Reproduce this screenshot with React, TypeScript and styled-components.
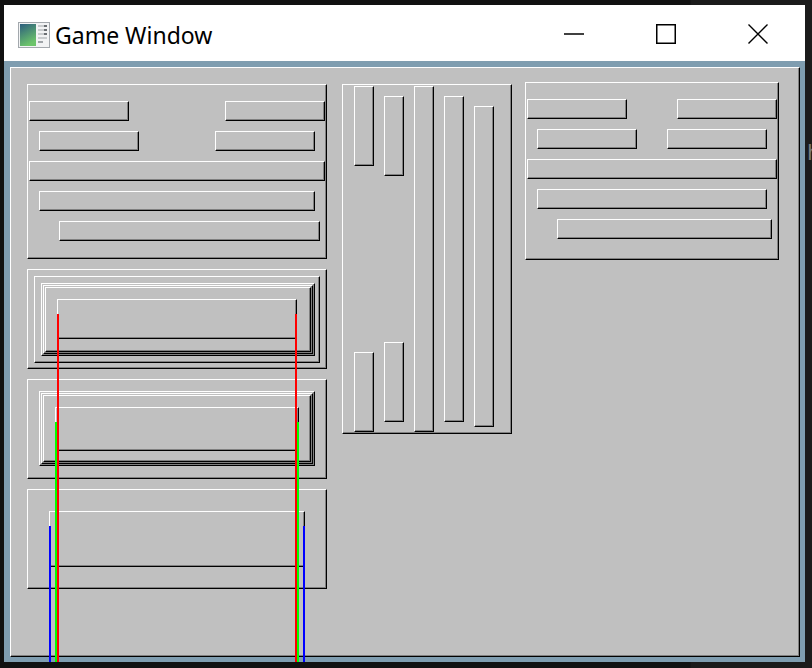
import React from "react";
import styled, { createGlobalStyle, css } from "styled-components";

const Global = createGlobalStyle`
  html, body { margin: 0; padding: 0; background: #111111; }
  #root { width: 812px; height: 668px; }
  * { box-sizing: border-box; }
`;

const raised = css`
  border-style: solid;
  border-width: 1px;
  border-color: #ffffff #000000 #000000 #ffffff;
  box-shadow: inset -1px -1px 0 #808080;
`;

const Desktop = styled.div`
  position: relative;
  width: 812px;
  height: 668px;
  padding: 5px 0 0 4px;
  background: #111111;
  overflow: hidden;
  font-family: "Noto Sans", "Open Sans", sans-serif;
`;

const BackWindow = styled.div`
  position: absolute;
  left: 690px;
  top: 0;
  width: 122px;
  height: 668px;
  background: #1b1b1b;
  border-left: 1px solid #161616;
`;

const BackGlyph = styled.span`
  position: absolute;
  left: 116px;
  top: 136px;
  font-size: 22px;
  color: #7a7a7a;
`;

const Window = styled.div`
  position: relative;
  width: 801px;
  height: 657px;
  display: flex;
  flex-direction: column;
  overflow: hidden;
`;

const TitleBar = styled.div`
  height: 56px;
  flex: none;
  background: #ffffff;
  display: flex;
  align-items: center;
  padding: 0 1px 0 14px;
`;

const AppIcon = styled.svg`
  display: block;
  flex: none;
  margin-top: 4px;
`;

const Title = styled.span`
  margin-left: 5px;
  padding-top: 3px;
  font-size: 23px;
  color: #000000;
  white-space: nowrap;
`;

const Controls = styled.div`
  margin-left: auto;
  display: flex;
  height: 100%;
`;

const CtrlButton = styled.div`
  width: 92px;
  height: 100%;
  display: flex;
  align-items: center;
  justify-content: center;
  padding-top: 2px;
`;

const Frame = styled.div`
  flex: 1;
  background: #7f9db0;
  padding: 6px 5px 5px 6px;
  display: flex;
`;

const Canvas = styled.div`
  ${raised};
  flex: 1;
  background: #c0c0c0;
  display: flex;
  align-items: flex-start;
  padding: 16px 0 0 16px;
`;

const LeftColumn = styled.div`
  display: flex;
  flex-direction: column;
  gap: 10px;
  width: 300px;
`;

const Box = styled.div<{ $w: number; $h: number; $pad?: string }>`
  ${raised};
  position: relative;
  flex: none;
  width: ${(p) => p.$w}px;
  height: ${(p) => p.$h}px;
  padding: ${(p) => p.$pad ?? "0"};
`;

const RowPanel = styled.div<{ $w: number; $h: number; $ml?: number; $mt?: number }>`
  ${raised};
  flex: none;
  width: ${(p) => p.$w}px;
  height: ${(p) => p.$h}px;
  margin-left: ${(p) => p.$ml ?? 0}px;
  margin-top: ${(p) => p.$mt ?? 0}px;
  padding: 16px 1px 0 1px;
  display: flex;
  flex-direction: column;
  gap: 10px;
`;

const Row = styled.div<{ $inset?: string }>`
  display: flex;
  justify-content: space-between;
  height: 20px;
  padding: ${(p) => p.$inset ?? "0"};
`;

const HBar = styled.div<{ $grow?: boolean }>`
  ${raised};
  height: 20px;
  width: ${(p) => (p.$grow ? "auto" : "100px")};
  flex: ${(p) => (p.$grow ? 1 : "none")};
`;

const ColumnPanel = styled.div<{ $ml: number }>`
  ${raised};
  flex: none;
  width: 170px;
  height: 350px;
  margin-left: ${(p) => p.$ml}px;
  padding: 1px 0 1px 11px;
  display: flex;
  gap: 10px;
`;

const Col = styled.div<{ $inset?: string }>`
  display: flex;
  flex-direction: column;
  justify-content: space-between;
  width: 20px;
  padding: ${(p) => p.$inset ?? "0"};
`;

const VBar = styled.div<{ $grow?: boolean }>`
  ${raised};
  width: 20px;
  height: ${(p) => (p.$grow ? "auto" : "80px")};
  flex: ${(p) => (p.$grow ? 1 : "none")};
`;

const Marker = styled.div<{ $color: string; $side: "left" | "right" }>`
  position: absolute;
  z-index: 1;
  top: 14px;
  ${(p) => p.$side}: -1px;
  width: 2px;
  height: 420px;
  background: ${(p) => p.$color};
`;

function Markers({ color }: { color: string }) {
  return (
    <>
      <Marker $color={color} $side="left" />
      <Marker $color={color} $side="right" />
    </>
  );
}

function RowLayout({ w, h, ml, mt }: { w: number; h: number; ml?: number; mt?: number }) {
  return (
    <RowPanel $w={w} $h={h} $ml={ml} $mt={mt}>
      <Row>
        <HBar />
        <HBar />
      </Row>
      <Row $inset="0 10px">
        <HBar />
        <HBar />
      </Row>
      <Row>
        <HBar $grow />
      </Row>
      <Row $inset="0 10px">
        <HBar $grow />
      </Row>
      <Row $inset="0 5px 0 30px">
        <HBar $grow />
      </Row>
    </RowPanel>
  );
}

export default function App() {
  return (
    <>
      <Global />
      <Desktop>
        <BackWindow>
          <BackGlyph>h</BackGlyph>
        </BackWindow>
        <Window>
          <TitleBar>
            <AppIcon width="32" height="26" viewBox="0 0 32 26">
              <defs>
                <linearGradient id="appGrad" x1="0" y1="0" x2="0.4" y2="1">
                  <stop offset="0" stopColor="#2c5d7e" />
                  <stop offset="1" stopColor="#6cc46a" />
                </linearGradient>
              </defs>
              <rect x="0.5" y="0.5" width="31" height="25" fill="#f2f3f4" stroke="#a3a8ad" />
              <rect x="2" y="2" width="16" height="22" fill="url(#appGrad)" />
              <rect x="20" y="3" width="6" height="2" fill="#c9ccce" />
              <rect x="26" y="3" width="3" height="2" fill="#6b6f73" />
              <rect x="20" y="7" width="6" height="2" fill="#c9ccce" />
              <rect x="26" y="7" width="3" height="2" fill="#6b6f73" />
              <rect x="20" y="11" width="6" height="2" fill="#c9ccce" />
              <rect x="26" y="11" width="3" height="2" fill="#6b6f73" />
              <rect x="20" y="15" width="9" height="2" fill="#c9ccce" />
              <rect x="20" y="19" width="5" height="2" fill="#9fa4a8" />
            </AppIcon>
            <Title>Game Window</Title>
            <Controls>
              <CtrlButton>
                <svg width="20" height="20" viewBox="0 0 20 20">
                  <line x1="0" y1="10" x2="20" y2="10" stroke="#000" strokeWidth="1.5" />
                </svg>
              </CtrlButton>
              <CtrlButton>
                <svg width="20" height="20" viewBox="0 0 20 20">
                  <rect x="0.75" y="0.75" width="18.5" height="18.5" fill="none" stroke="#000" strokeWidth="1.5" />
                </svg>
              </CtrlButton>
              <CtrlButton>
                <svg width="20" height="20" viewBox="0 0 20 20">
                  <path d="M0.5 0.5 L19.5 19.5 M19.5 0.5 L0.5 19.5" stroke="#000" strokeWidth="1.4" />
                </svg>
              </CtrlButton>
            </Controls>
          </TitleBar>
          <Frame>
            <Canvas>
              <LeftColumn>
                <RowLayout w={300} h={175} />
                <Box $w={300} $h={100} $pad="6px">
                  <Box $w={286} $h={87} $pad="6px">
                    <Box $w={274} $h={73} $pad="1px">
                      <Box $w={270} $h={69} $pad="1px">
                        <Box $w={266} $h={65} $pad="11px">
                          <Box $w={240} $h={40}>
                            <Markers color="#ff0000" />
                          </Box>
                        </Box>
                      </Box>
                    </Box>
                  </Box>
                </Box>
                <Box $w={300} $h={100} $pad="11px">
                  <Box $w={276} $h={75} $pad="1px">
                    <Box $w={272} $h={71} $pad="1px">
                      <Box $w={268} $h={67} $pad="11px">
                        <Box $w={244} $h={44}>
                          <Markers color="#00ff00" />
                        </Box>
                      </Box>
                    </Box>
                  </Box>
                </Box>
                <Box $w={300} $h={100} $pad="21px">
                  <Box $w={256} $h={56}>
                    <Markers color="#0000ff" />
                  </Box>
                </Box>
              </LeftColumn>
              <ColumnPanel $ml={15}>
                <Col>
                  <VBar />
                  <VBar />
                </Col>
                <Col $inset="10px 0">
                  <VBar />
                  <VBar />
                </Col>
                <Col>
                  <VBar $grow />
                </Col>
                <Col $inset="10px 0">
                  <VBar $grow />
                </Col>
                <Col $inset="20px 0 5px 0">
                  <VBar $grow />
                </Col>
              </ColumnPanel>
              <RowLayout w={254} h={178} ml={13} mt={-2} />
            </Canvas>
          </Frame>
        </Window>
      </Desktop>
    </>
  );
}
